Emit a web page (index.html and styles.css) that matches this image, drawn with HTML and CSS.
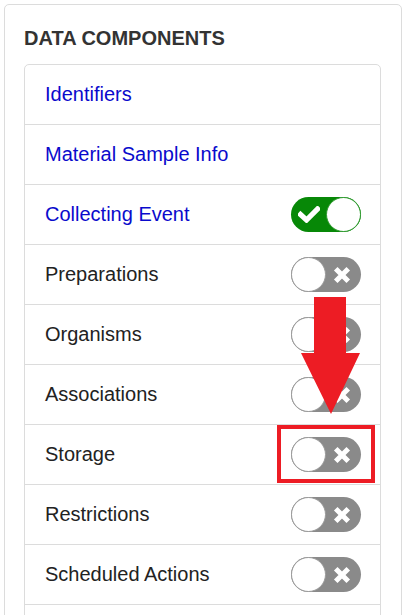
FILE: index.html
```html
<!DOCTYPE html>
<html>
<head>
<meta charset="utf-8">
<link rel="stylesheet" href="styles.css">
</head>
<body>
<div class="card">
  <h2 class="title">DATA COMPONENTS</h2>
  <ul class="list">
    <li class="row"><a class="link">Identifiers</a></li>
    <li class="row"><a class="link">Material Sample Info</a></li>
    <li class="row"><a class="link">Collecting Event</a>
      <span class="toggle on">
        <svg class="icon check" viewBox="0 0 22 17"><polyline points="2.5,8.5 8.5,14 19.5,3" fill="none" stroke="#fff" stroke-width="5.2" stroke-linecap="square"/></svg>
        <span class="knob"></span>
      </span>
    </li>
    <li class="row"><span class="label">Preparations</span>
      <span class="toggle off"><span class="knob"></span><svg class="icon cross" viewBox="0 0 18 18"><path d="M4.5 4.5L13.5 13.5M13.5 4.5L4.5 13.5" stroke="#fff" stroke-width="5" stroke-linecap="square"/></svg></span>
    </li>
    <li class="row"><span class="label">Organisms</span>
      <span class="toggle off"><span class="knob"></span><svg class="icon cross" viewBox="0 0 18 18"><path d="M4.5 4.5L13.5 13.5M13.5 4.5L4.5 13.5" stroke="#fff" stroke-width="5" stroke-linecap="square"/></svg></span>
    </li>
    <li class="row"><span class="label">Associations</span>
      <span class="toggle off"><span class="knob"></span><svg class="icon cross" viewBox="0 0 18 18"><path d="M4.5 4.5L13.5 13.5M13.5 4.5L4.5 13.5" stroke="#fff" stroke-width="5" stroke-linecap="square"/></svg></span>
    </li>
    <li class="row"><span class="label">Storage</span>
      <span class="toggle off"><span class="knob"></span><svg class="icon cross" viewBox="0 0 18 18"><path d="M4.5 4.5L13.5 13.5M13.5 4.5L4.5 13.5" stroke="#fff" stroke-width="5" stroke-linecap="square"/></svg></span>
    </li>
    <li class="row"><span class="label">Restrictions</span>
      <span class="toggle off"><span class="knob"></span><svg class="icon cross" viewBox="0 0 18 18"><path d="M4.5 4.5L13.5 13.5M13.5 4.5L4.5 13.5" stroke="#fff" stroke-width="5" stroke-linecap="square"/></svg></span>
    </li>
    <li class="row"><span class="label">Scheduled Actions</span>
      <span class="toggle off"><span class="knob"></span><svg class="icon cross" viewBox="0 0 18 18"><path d="M4.5 4.5L13.5 13.5M13.5 4.5L4.5 13.5" stroke="#fff" stroke-width="5" stroke-linecap="square"/></svg></span>
    </li>
    <li class="row"><span class="label">&nbsp;</span></li>
  </ul>
</div>
<div class="highlight"></div>
<svg class="arrow" viewBox="0 0 60 118" width="60" height="118">
  <polygon points="13,0 45,0 45,56 59,56 30,117 0,56 13,56" fill="#ed1c24"/>
</svg>
</body>
</html>
```
FILE: styles.css
```css
html, body {
  margin: 0;
  padding: 0;
  background: #fff;
  overflow: hidden;
}
body {
  font-family: "Liberation Sans", Arial, sans-serif;
}
.card {
  margin: 4px 5px 0 4px;
  border: 1px solid #dcdcdc;
  border-radius: 5px;
  padding: 21px 20px 0 19px;
  height: 700px;
}
.title {
  margin: 0 0 14px 0;
  font-size: 20px;
  line-height: 24px;
  font-weight: bold;
  color: #333;
}
.list {
  list-style: none;
  margin: 0;
  padding: 0;
  border: 1px solid #dcdcdc;
  border-radius: 5px 5px 0 0;
}
.row {
  height: 59px;
  box-sizing: content-box;
  border-bottom: 1px solid #dcdcdc;
  display: flex;
  align-items: center;
  justify-content: space-between;
  padding: 0 19px 0 20px;
  font-size: 20px;
  line-height: 24px;
}
.link {
  color: #0a0acc;
  text-decoration: none;
  margin-bottom: 2px;
}
.label {
  color: #222;
  margin-bottom: 2px;
}
.toggle {
  width: 70px;
  height: 35px;
  border-radius: 18px;
  display: flex;
  align-items: center;
  box-sizing: border-box;
}
.toggle.on {
  background: #078807;
  justify-content: space-between;
}
.toggle.off {
  background: #8a8a8a;
}
.knob {
  width: 35px;
  height: 35px;
  border-radius: 50%;
  background: #fff;
  box-sizing: border-box;
  flex: none;
}
.toggle.on .knob {
  border: 1px solid #2f9a2f;
}
.toggle.off .knob {
  border: 1px solid #9a9a9a;
}
.icon {
  display: block;
  flex: none;
}
.check {
  width: 22px;
  height: 17px;
  margin-left: 7px;
}
.cross {
  width: 18px;
  height: 18px;
  margin-left: 7px;
}
.highlight {
  position: absolute;
  left: 277px;
  top: 425px;
  width: 98px;
  height: 58px;
  border: 4px solid #ed1c24;
  box-sizing: border-box;
}
.arrow {
  position: absolute;
  left: 301px;
  top: 297px;
}
```
